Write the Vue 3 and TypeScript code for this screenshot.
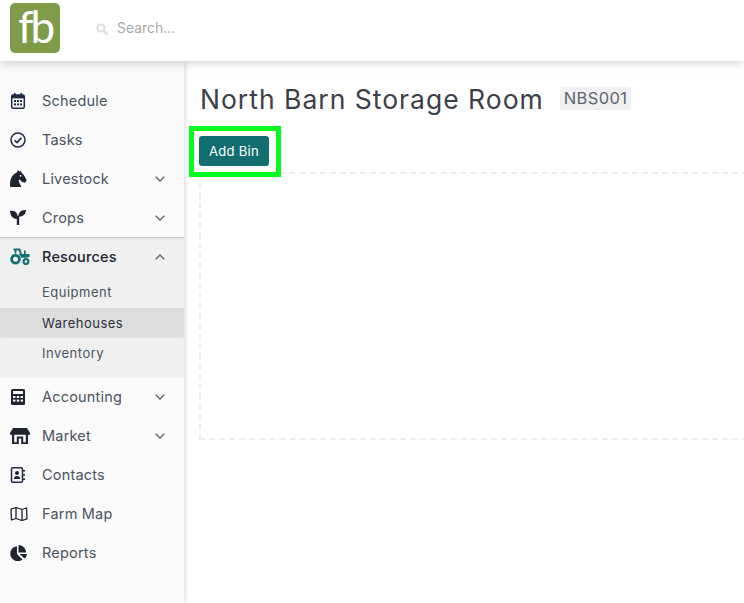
<script setup lang="ts">
interface NavItem { label: string; icon: string; chevron?: boolean }
const top: NavItem[] = [
  { label: 'Schedule', icon: 'calendar' },
  { label: 'Tasks', icon: 'check' },
  { label: 'Livestock', icon: 'horse', chevron: true },
  { label: 'Crops', icon: 'seed', chevron: true },
]
const bottom: NavItem[] = [
  { label: 'Accounting', icon: 'calc', chevron: true },
  { label: 'Market', icon: 'store', chevron: true },
  { label: 'Contacts', icon: 'contact' },
  { label: 'Farm Map', icon: 'map' },
  { label: 'Reports', icon: 'pie' },
]
const subs = ['Equipment', 'Warehouses', 'Inventory']
</script>

<template>
  <div class="page">
    <header class="header">
      <div class="logo">fb</div>
      <svg class="search-icon" viewBox="0 0 12 12"><circle cx="5" cy="5" r="3.6" fill="none" stroke="#ddd" stroke-width="2"/><path d="M7.6 7.6 11 11" stroke="#ddd" stroke-width="2.4" stroke-linecap="round"/></svg>
      <span class="search">Search...</span>
    </header>
    <div class="body">
      <nav class="sidebar">
        <div class="spacer"></div>
        <div v-for="item in top" :key="item.label" class="item">
          <span class="icon">
            <svg v-if="item.icon === 'calendar'" width="16" height="18" viewBox="0 0 16 18"><rect x="1.700" y="3" width="12.600" height="13.300" rx="1.500" fill="none" stroke="#1f2a44" stroke-width="1.500"/><rect x="2" y="3" width="12" height="3.400" fill="#1f2a44"/><rect x="4" y="1" width="1.600" height="3" fill="#1f2a44"/><rect x="10.400" y="1" width="1.600" height="3" fill="#1f2a44"/><g fill="#1f2a44"><rect x="4" y="8" width="2" height="2"/><rect x="7" y="8" width="2" height="2"/><rect x="10" y="8" width="2" height="2"/><rect x="4" y="11.400" width="2" height="2"/><rect x="7" y="11.400" width="2" height="2"/><rect x="10" y="11.400" width="2" height="2"/></g></svg>
            <svg v-else-if="item.icon === 'check'" width="16" height="16" viewBox="0 0 16 16"><circle cx="8" cy="8" r="7" fill="none" stroke="#1f2a44" stroke-width="1.500"/><path d="M4.600 8.300 7 10.600 11.400 5.900" fill="none" stroke="#1f2a44" stroke-width="1.600"/></svg>
            <svg v-else-if="item.icon === 'horse'" width="17" height="17" viewBox="0 0 17 17"><path d="M.2 17C-.6 10 2 4.300 6.800 2.600L8 0l1.500 1.800L11 .6l.4 2.200c2.300 1.400 4.100 4.700 5.300 7.700l-1.700 2.300-3.300-1-1.900-2.200-1 .3c-.2 2.600 1.400 4.600 2.700 7.100Z" fill="#1f2430"/><circle cx="10.600" cy="5.800" r=".9" fill="#fff"/></svg>
            <svg v-else-if="item.icon === 'seed'" width="16" height="15" viewBox="0 0 16 15"><path d="M0 1C5.200.2 8.300 3 7.800 9 3 9 .4 6.500 0 1ZM16 0c-4.500-.2-7.600 2-7.700 6.800C13 6.800 15.800 4.500 16 0Z" fill="#1f2430"/><rect x="6.800" y="6" width="2.400" height="9" fill="#1f2430"/></svg>
          </span>
          <span class="label">{{ item.label }}</span>
          <svg v-if="item.chevron" class="chev" viewBox="0 0 10 6"><path d="M.7.8 5 5 9.300.8" fill="none" stroke="#5b6470" stroke-width="1.300"/></svg>
        </div>

        <section class="group">
          <div class="item active">
            <span class="icon">
              <svg width="20" height="17" viewBox="0 0 20 17"><path d="M3.500 .6h6.600l1.800 5.400H14V2.500h1.700V6h3.800v3l-4 .8H11A5 5 0 0 0 2.400 7V6h2.200V2.400H3.500Z" fill="#136f6f"/><path d="M6.400 2.400V6h3.500L8.700 2.400Z" fill="#f0f0f0"/><circle cx="5.500" cy="11.200" r="3.900" fill="none" stroke="#136f6f" stroke-width="2.800"/><circle cx="16" cy="13.600" r="2.400" fill="none" stroke="#136f6f" stroke-width="2.200"/></svg>
            </span>
            <span class="label">Resources</span>
            <svg class="chev" viewBox="0 0 10 6"><path d="M.7 5.200 5 1l4.300 4.200" fill="none" stroke="#5b6470" stroke-width="1.300"/></svg>
          </div>
          <div class="subs">
            <div v-for="s in subs" :key="s" class="sub" :class="{ current: s === 'Warehouses' }">{{ s }}</div>
          </div>
        </section>

        <div v-for="item in bottom" :key="item.label" class="item">
          <span class="icon">
            <svg v-if="item.icon === 'calc'" width="15" height="16" viewBox="-1 0 15 16"><rect width="14" height="16" rx="1.500" fill="#1f2430"/><rect x="2" y="2" width="10" height="3" fill="#fafafa"/><g fill="#fafafa"><rect x="2" y="7" width="2.400" height="2"/><rect x="5.800" y="7" width="2.400" height="2"/><rect x="9.600" y="7" width="2.400" height="2"/><rect x="2" y="10.600" width="2.400" height="2"/><rect x="5.800" y="10.600" width="2.400" height="2"/><rect x="9.600" y="10.600" width="2.400" height="2"/></g></svg>
            <svg v-else-if="item.icon === 'store'" width="20" height="16" viewBox="0 0 20 16"><path d="M3 0h14l3 5v1.800H0V5Z" fill="#1f2430"/><path d="M2 6h2.200v10H2ZM15.800 6H18v10h-2.200ZM6.800 8.500h6.400V16h-2v-5.500H8.800V16h-2Z" fill="#1f2430"/><path d="M4 14.200h3V16H4ZM13 14.200h3V16h-3Z" fill="#1f2430"/></svg>
            <svg v-else-if="item.icon === 'contact'" width="15" height="16" viewBox="0 0 15 16"><rect x="1.500" y=".8" width="11" height="14.400" rx="1.200" fill="none" stroke="#1f2a44" stroke-width="1.500"/><circle cx="7" cy="6" r="2" fill="#1f2430"/><path d="M3.800 12c0-2 1.400-3 3.200-3s3.200 1 3.200 3Z" fill="#1f2430"/><path d="M13 3h2v1.500h-2ZM13 7.200h2v1.500h-2ZM13 11.400h2v1.500h-2Z" fill="#1f2430"/></svg>
            <svg v-else-if="item.icon === 'map'" width="18" height="15" viewBox="0 0 18 15"><path d="M6 1.500 1 3.200 1.500 14 6 12.500l6 2 5-1.700L16.500 2 12 3.500ZM6 1.500V12.500M12 3.500V14.500" fill="none" stroke="#1f2430" stroke-width="1.300" stroke-linejoin="round"/></svg>
            <svg v-else width="17" height="16" viewBox="0 0 17 16"><path d="M7 1.200V9l5.500 5.500A7.500 7.500 0 1 1 7 1.200Z" fill="#1f2430"/><path d="M8.500 0A7.500 7.500 0 0 1 16 7.500H8.500Z" fill="#1f2430"/><path d="M9.500 9H17a7.500 7.500 0 0 1-2.400 4.600Z" fill="#1f2430"/></svg>
          </span>
          <span class="label">{{ item.label }}</span>
          <svg v-if="item.chevron" class="chev" viewBox="0 0 10 6"><path d="M.7.8 5 5 9.300.8" fill="none" stroke="#5b6470" stroke-width="1.300"/></svg>
        </div>
      </nav>

      <main class="main">
        <div class="title-row">
          <h1 class="title">North Barn Storage Room</h1>
          <span class="code">NBS001</span>
        </div>
        <div class="actions">
          <button class="add">Add Bin</button>
          <span class="highlight"></span>
        </div>
        <div class="dropzone"></div>
      </main>
    </div>
  </div>
</template>

<style>
html, body { margin: 0; background: #fff; overflow: hidden; }
</style>

<style scoped>
.page { width: 744px; height: 603px; display: flex; flex-direction: column; overflow: hidden; font-family: Inter, "Noto Sans", sans-serif; color: #3f4651; }
.header { height: 61px; flex: none; display: flex; align-items: center; background: #fff; box-shadow: 0 1px 10px rgba(0,0,0,.22); position: relative; z-index: 3; box-sizing: border-box; padding: 0 0 5px 10px; }
.logo { width: 50px; height: 50px; border-radius: 5px; background: #7f9c4b; color: #fff; font: 400 44px/46px Lato, sans-serif; text-align: center; letter-spacing: -3px; }
.search-icon { width: 12px; height: 12px; margin: 2px 9px 0 36px; }
.search { font-size: 14px; color: #aaa; margin-top: -2px; letter-spacing: -.05px; }
.body { flex: 1; display: flex; min-height: 0; }
.sidebar { width: 184px; flex: none; background: #fafafa; box-shadow: 1px 0 5px rgba(0,0,0,.16); position: relative; z-index: 2; }
.spacer { height: 20px; }
.item { height: 39px; display: flex; align-items: center; padding: 0 19px 0 10px; font-size: 14.500px; color: #4b5360; }
.icon { width: 32px; flex: none; display: flex; align-items: center; }
.label { flex: 1; letter-spacing: .2px; }
.chev { width: 10px; height: 6px; }
.group { background: #f0f0f0; box-shadow: inset 0 2px 2px -1px rgba(0,0,0,.2); height: 141px; margin-bottom: -1px; }
.active { color: #1f2430; font-weight: 500; }
.subs { display: flex; flex-direction: column; margin-top: 1px; }
.sub { height: 30.500px; line-height: 30.500px; padding-left: 42px; font-size: 13px; letter-spacing: .5px; color: #4b5360; }
.current { background: #ddd; color: #2b303a; }
.main { flex: 1; min-width: 0; padding: 0 0 0 15px; }
.title-row { display: flex; align-items: center; height: 75px; padding-left: 1px; }
.title { margin: 0; font-size: 26.500px; font-weight: 400; color: #3b4048; letter-spacing: 1px; white-space: nowrap; }
.code { margin-left: 16px; background: #f0f0f0; border-radius: 2px; padding: 2px 4px; font-size: 16.500px; line-height: 19px; color: #5d6570; letter-spacing: .4px; }
.actions { position: relative; height: 36px; }
.add { display: block; width: 70px; height: 30px; border: 0; border-radius: 3px; background: #136f6f; color: #fff; font: 400 13px Inter, sans-serif; letter-spacing: .3px; padding: 0; }
.highlight { position: absolute; left: -10px; top: -10px; width: 92px; height: 51px; box-sizing: border-box; border: 5px solid #00ff1e; z-index: 1; }
.dropzone { width: 620px; height: 268px; box-sizing: border-box; border: 2px dashed #eee; }
</style>
